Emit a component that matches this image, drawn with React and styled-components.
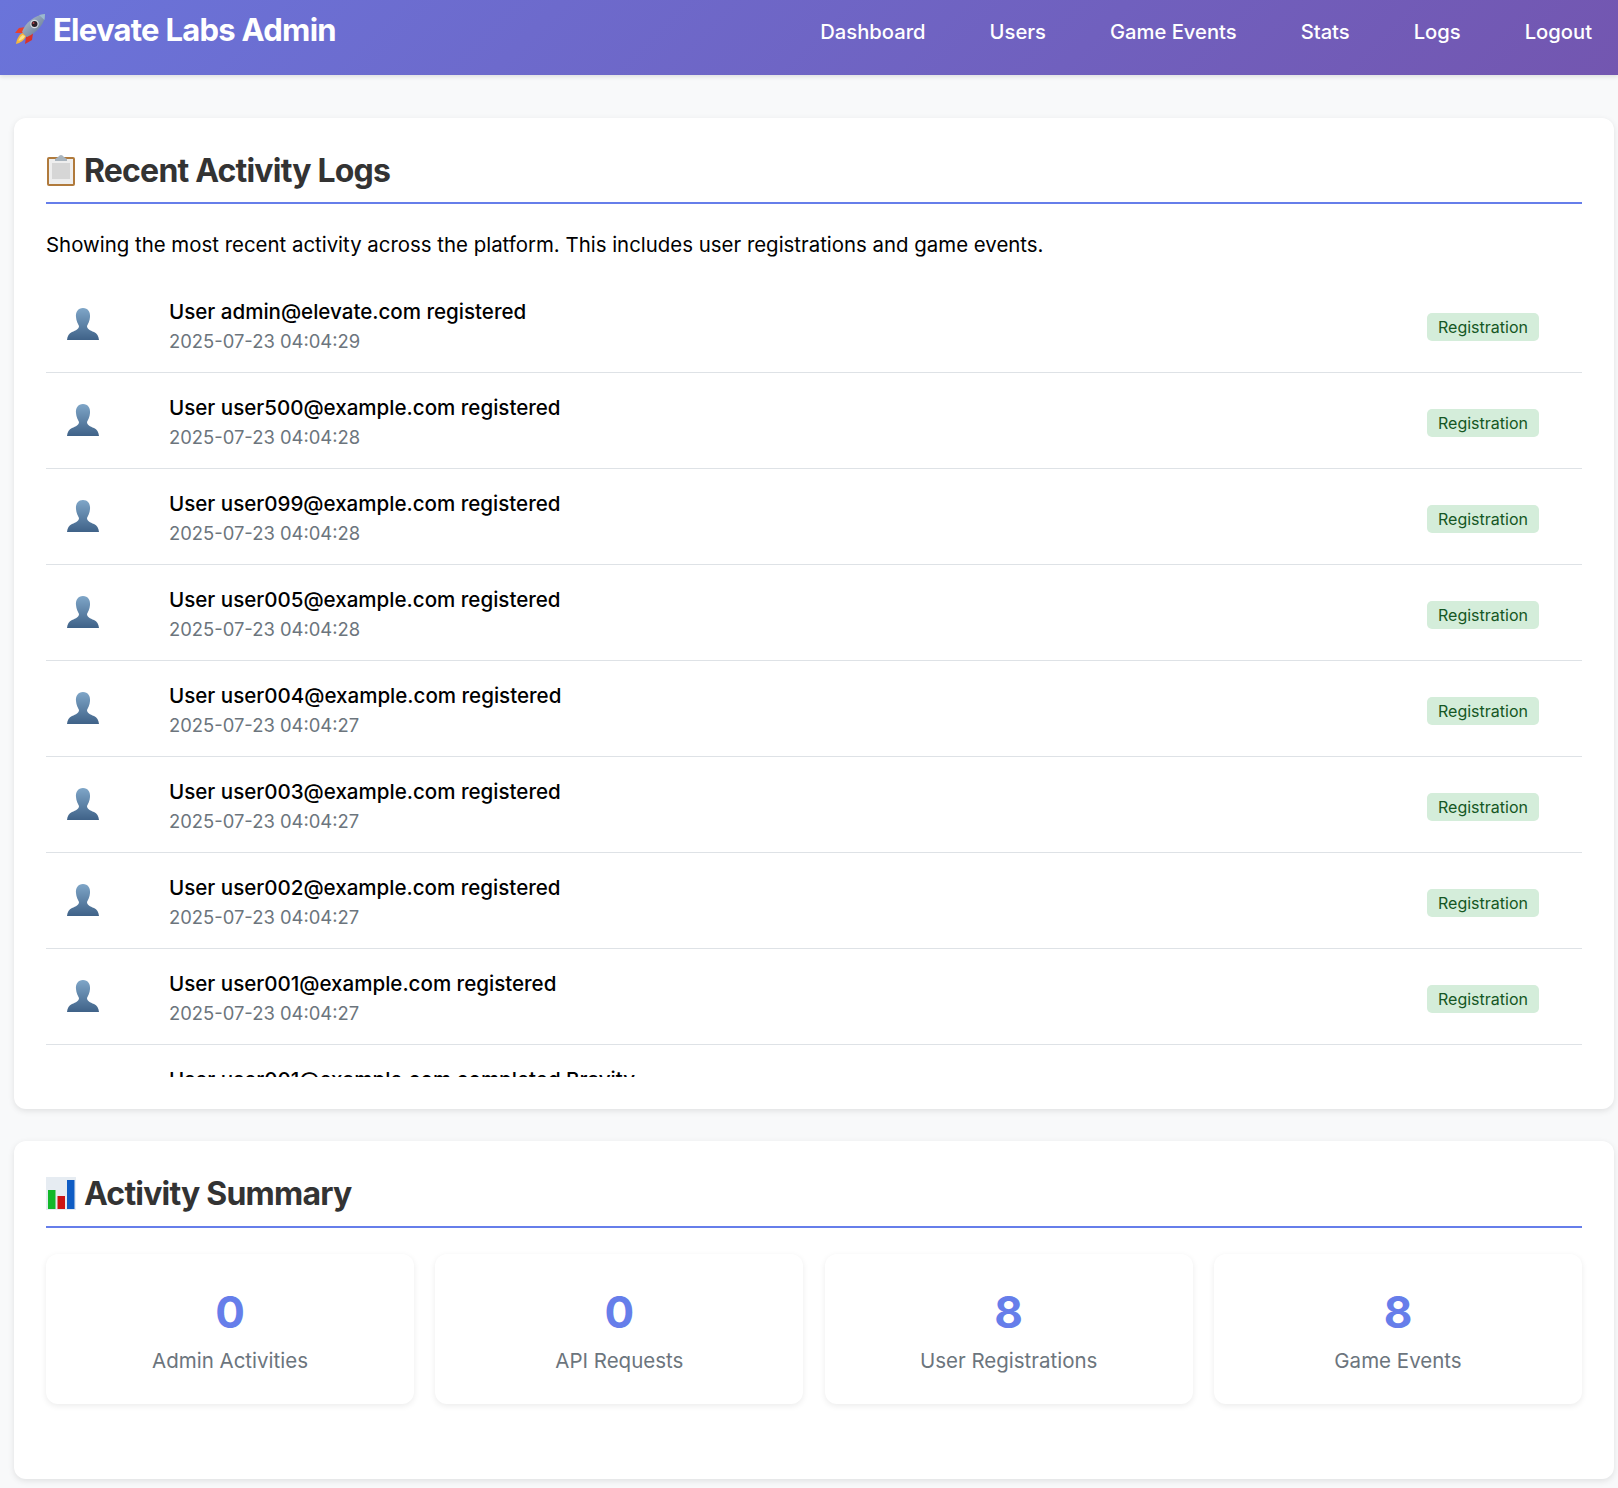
import React from 'react';
import styled, { createGlobalStyle } from 'styled-components';

const Global = createGlobalStyle`
  html, body { margin: 0; padding: 0; background: #f8f9fa; }
  body { font-family: Inter, "Liberation Sans", sans-serif; color: #000; }
  * { box-sizing: border-box; }
`;
const Header = styled.header`
  height: 75px;
  padding: 0 26px 0 14px;
  display: flex;
  align-items: flex-start;
  justify-content: space-between;
  background: linear-gradient(135deg, #6a74da 0%, #7356b0 100%);
  box-shadow: 0 2px 4px rgba(0, 0, 0, 0.1);
`;
const Brand = styled.div`
  display: flex;
  align-items: center;
  gap: 7px;
  height: 58px;
  color: #fff;
  font-size: 31px;
  font-weight: 700;
  letter-spacing: -0.73px;
`;
const Nav = styled.nav`
  display: flex;
  gap: 64px;
  height: 62px;
  align-items: center;
`;
const NavLink = styled.a`
  color: #fff;
  font-size: 20.2px;
  font-weight: 500;
`;
const Main = styled.main`
  padding: 43px 4px 9px 14px;
  display: flex;
  flex-direction: column;
  gap: 32px;
`;
const Card = styled.section`
  background: #fff;
  border-radius: 12px;
  padding: 32px;
  box-shadow: 0 2px 6px rgba(0, 0, 0, 0.1);
`;
const Heading = styled.h2`
  display: flex;
  align-items: center;
  gap: 8px;
  margin: 0 0 ${p => p.$after}px;
  height: ${p => p.$height}px;
  padding-bottom: 12px;
  border-bottom: 2px solid #667eea;
  color: #333;
  font-size: 32px;
  font-weight: 700;
  letter-spacing: -0.8px;
`;
const Intro = styled.p`
  margin: 0 0 17px;
  font-size: 20.42px;
  line-height: 30px;
`;
const List = styled.div`
  height: 800px;
  overflow: hidden;
`;
const Row = styled.div`
  display: grid;
  grid-template-columns: 123px 1fr auto;
  align-items: center;
  height: 96px;
  padding-right: 43px;
  border-bottom: 1px solid #dee2e6;
`;
const IconCell = styled.div`
  display: flex;
  padding-left: 21px;
`;
const RowText = styled.div`
  padding-top: 2px;
`;
const Title = styled.div`
  font-size: 20.55px;
  font-weight: 500;
  line-height: 29px;
`;
const Time = styled.div`
  margin-top: 2px;
  color: #6c757d;
  font-size: 18.4px;
  line-height: 26px;
`;
const Badge = styled.span`
  display: block;
  width: 112px;
  height: 28px;
  margin-top: 4px;
  border-radius: 5px;
  background: #d4edda;
  color: #155724;
  font-size: 16px;
  line-height: 28px;
  text-align: center;
`;
const StatGrid = styled.div`
  display: grid;
  grid-template-columns: repeat(4, 1fr);
  gap: 21.33px;
`;
const Stat = styled.div`
  height: 150px;
  padding-top: 32px;
  border-radius: 12px;
  background: #fff;
  box-shadow: 0 2px 6px rgba(0, 0, 0, 0.08);
  text-align: center;
`;
const StatValue = styled.div`
  color: #667eea;
  font-size: 44px;
  font-weight: 700;
  line-height: 52px;
`;
const StatLabel = styled.div`
  margin-top: 8px;
  color: #6c757d;
  font-size: 20.5px;
  line-height: 30px;
`;
const StatSpacer = styled.div`
  height: 43px;
`;

const Rocket = () => (
  <svg width="32" height="32" viewBox="0 0 32 32">
    <defs>
      <linearGradient id="rb" x1="0" y1="0" x2="1" y2="1">
        <stop offset="0" stopColor="#b8c8d8" />
        <stop offset="1" stopColor="#5b6f8c" />
      </linearGradient>
    </defs>
    <path d="M12 14 L5 15 L1 20 L9 20 Z" fill="#e8402c" />
    <path d="M19 20 L18 27 L11 31 L12 24 Z" fill="#d9322a" />
    <path d="M9 20 C5 21 2.5 27 2 31 C6 30 11 27 12 23 Z" fill="#f6b73c" />
    <path d="M8.5 22 C6 24 5 26 4.5 28 C7 27 10 26 11 23 Z" fill="#fbe28a" />
    <path d="M8 19 C11 10 21 2 31 1 C31 10 24 19 13 24 Z" fill="url(#rb)" />
    <circle cx="20.5" cy="11" r="4.2" fill="#d8dde4" />
    <circle cx="20.5" cy="11" r="3" fill="#2a1f28" />
    <circle cx="19.5" cy="10" r="1" fill="#b8434a" />
    <path d="M25 2 L31 1 L30.5 7 Z" fill="#9bbad0" />
  </svg>
);
const Clipboard = () => (
  <svg width="30" height="33" viewBox="0 0 30 33">
    <rect x="1" y="3" width="28" height="29" rx="2" fill="#b07a3c" />
    <rect x="3" y="5" width="24" height="25" fill="#eeeeee" />
    <rect x="6" y="9" width="18" height="16" fill="#d6d6d6" />
    <path d="M9 5 L12 3 Q15 -1 18 3 L21 5 L21 7 L9 7 Z" fill="#a9b4bd" />
  </svg>
);
const Bars = () => (
  <svg width="30" height="33" viewBox="0 0 30 33">
    <rect width="30" height="33" fill="#e6ecf2" />
    <rect x="2" y="13" width="7.5" height="19" fill="#12b82a" />
    <rect x="11.5" y="19" width="7.5" height="13" fill="#cc1414" />
    <rect x="21" y="3" width="7.5" height="29" fill="#0f5cc4" />
  </svg>
);
const Person = ({ id }) => (
  <svg width="32" height="33" viewBox="0 0 32 33">
    <defs>
      <linearGradient id={id} x1="0" y1="0" x2="0" y2="1">
        <stop offset="0" stopColor="#7fa6c8" />
        <stop offset="1" stopColor="#3f6288" />
      </linearGradient>
    </defs>
    <path
      d="M16 0 C21 0 23.5 4 23 9 C22.8 13 21 16 20 18 C20 21 23 22.5 27 24 C30 25.2 31.6 28 32 32 L0 32 C.4 28 2 25.2 5 24 C9 22.5 12 21 12 18 C11 16 9.2 13 9 9 C8.5 4 11 0 16 0 Z"
      fill={`url(#${id})`}
    />
  </svg>
);

const navItems = ['Dashboard', 'Users', 'Game Events', 'Stats', 'Logs', 'Logout'];
const rows = [
  ['User admin@elevate.com registered', '2025-07-23 04:04:29'],
  ['User user500@example.com registered', '2025-07-23 04:04:28'],
  ['User user099@example.com registered', '2025-07-23 04:04:28'],
  ['User user005@example.com registered', '2025-07-23 04:04:28'],
  ['User user004@example.com registered', '2025-07-23 04:04:27'],
  ['User user003@example.com registered', '2025-07-23 04:04:27'],
  ['User user002@example.com registered', '2025-07-23 04:04:27'],
  ['User user001@example.com registered', '2025-07-23 04:04:27'],
];
const stats = [
  ['0', 'Admin Activities'],
  ['0', 'API Requests'],
  ['8', 'User Registrations'],
  ['8', 'Game Events'],
];

export default function App() {
  return (
    <>
      <Global />
      <Header>
        <Brand><Rocket />Elevate Labs Admin</Brand>
        <Nav>{navItems.map(n => <NavLink key={n}>{n}</NavLink>)}</Nav>
      </Header>
      <Main>
        <Card>
          <Heading $height={54} $after={26}><Clipboard />Recent Activity Logs</Heading>
          <Intro>Showing the most recent activity across the platform. This includes user registrations and game events.</Intro>
          <List>
            {rows.map(([t, d], i) => (
              <Row key={t}>
                <IconCell><Person id={`p${i}`} /></IconCell>
                <RowText><Title>{t}</Title><Time>{d}</Time></RowText>
                <Badge>Registration</Badge>
              </Row>
            ))}
            <Row>
              <span />
              <RowText><Title>User user001@example.com completed Bravity</Title><Time>2025-07-23 04:04:27</Time></RowText>
            </Row>
          </List>
        </Card>
        <Card>
          <Heading $height={55} $after={26}><Bars />Activity Summary</Heading>
          <StatGrid>
            {stats.map(([v, l]) => (
              <Stat key={l}><StatValue>{v}</StatValue><StatLabel>{l}</StatLabel></Stat>
            ))}
          </StatGrid>
          <StatSpacer />
        </Card>
      </Main>
    </>
  );
}
